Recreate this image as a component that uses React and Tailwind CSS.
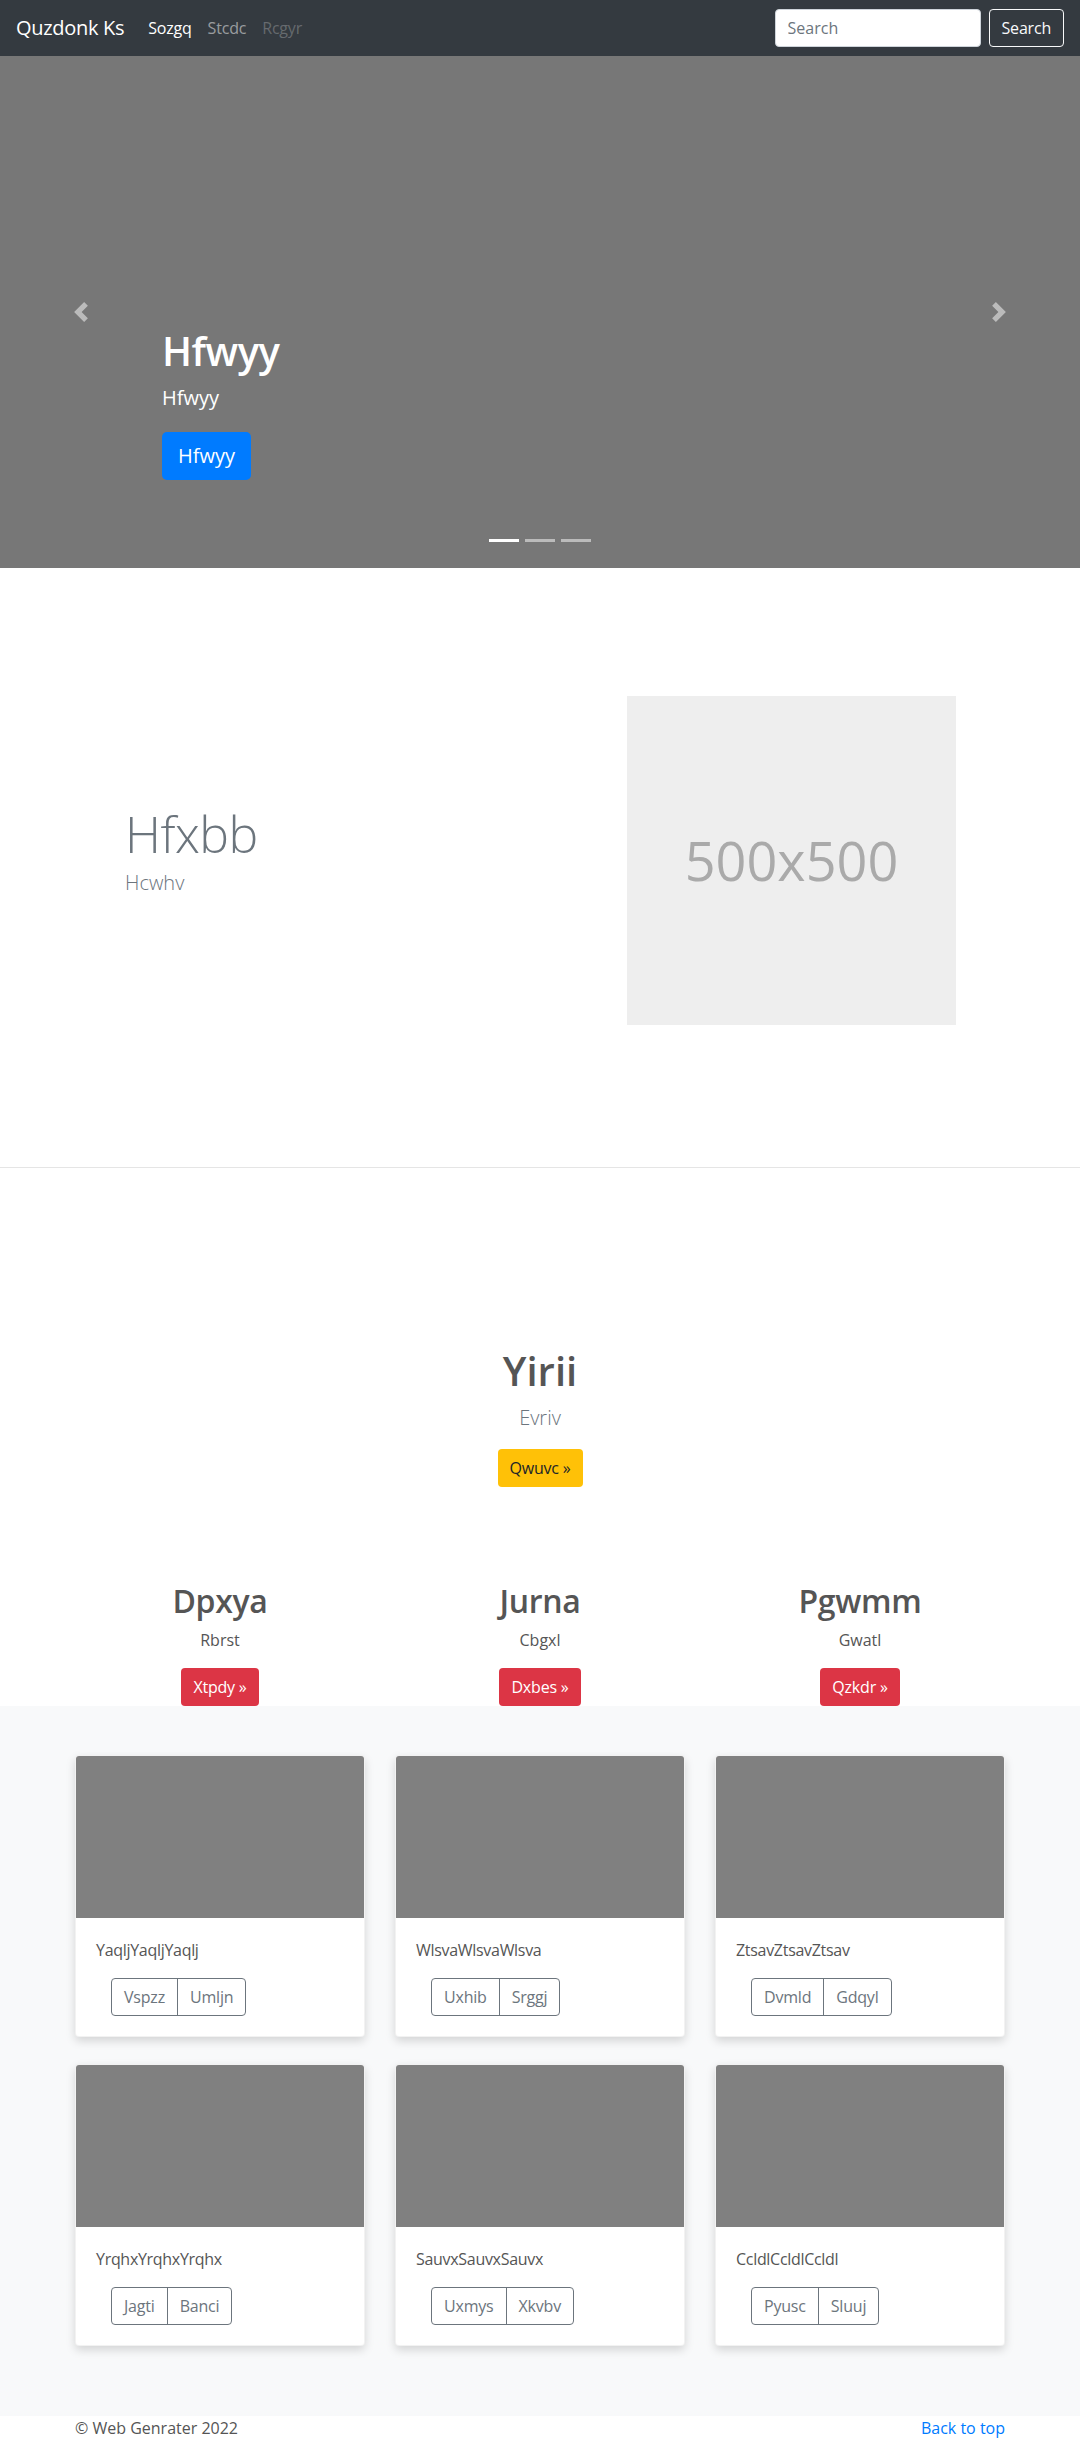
import React from "react";

const cards = [
  { text: "YaqljYaqljYaqlj", a: "Vspzz", b: "Umljn" },
  { text: "WlsvaWlsvaWlsva", a: "Uxhib", b: "Srggj" },
  { text: "ZtsavZtsavZtsav", a: "Dvmld", b: "Gdqyl" },
  { text: "YrqhxYrqhxYrqhx", a: "Jagti", b: "Banci" },
  { text: "SauvxSauvxSauvx", a: "Uxmys", b: "Xkvbv" },
  { text: "CcldlCcldlCcldl", a: "Pyusc", b: "Sluuj" },
];

const columns = [
  { title: "Dpxya", text: "Rbrst", btn: "Xtpdy »" },
  { title: "Jurna", text: "Cbgxl", btn: "Dxbes »" },
  { title: "Pgwmm", text: "Gwatl", btn: "Qzkdr »" },
];

const Chevron = ({ dir }) => (
  <svg width="20" height="20" viewBox="0 0 8 8" className="opacity-50">
    <path
      fill="#fff"
      d={
        dir === "prev"
          ? "M5.25 0l-4 4 4 4 1.5-1.5L4.25 4l2.5-2.5L5.25 0z"
          : "M2.75 0l-1.5 1.5L3.75 4l-2.5 2.5L2.75 8l4-4-4-4z"
      }
    />
  </svg>
);

const Navbar = () => (
  <nav className="h-[56px] bg-[#343a40] flex items-center px-4">
    <span className="text-[20px] leading-[30px] text-white mr-4 tracking-[-0.3px]">Quzdonk Ks</span>
    <a className="px-2 text-white leading-6 tracking-[-0.2px]">Sozgq</a>
    <a className="px-2 text-white/50 leading-6 tracking-[-0.2px]">Stcdc</a>
    <a className="px-2 text-white/25 leading-6 tracking-[-0.2px]">Rcgyr</a>
    <div className="ml-auto flex items-center">
      <input
        placeholder="Search"
        className="w-[206px] h-[38px] rounded bg-white border border-[#ced4da] px-3 text-[#495057] placeholder:text-[#6c757d] mr-2 outline-none"
      />
      <button className="h-[38px] px-3 rounded border border-[#f8f9fa] text-[#f8f9fa] tracking-[-0.2px]">Search</button>
    </div>
  </nav>
);

const Carousel = () => (
  <div className="relative h-[512px] bg-[#777]">
    <div className="pt-[271px] pl-[162px] text-white">
      <h1 className="text-[40px] leading-[48px] font-semibold mb-2 tracking-[-0.5px]">Hfwyy</h1>
      <p className="text-[20px] leading-[30px] mb-[19px]">Hfwyy</p>
      <button className="h-[48px] px-4 rounded-[5px] bg-[#007bff] text-[20px] text-white">Hfwyy</button>
    </div>
    <div className="absolute left-[71px] top-[246px]">
      <Chevron dir="prev" />
    </div>
    <div className="absolute right-[71px] top-[246px]">
      <Chevron dir="next" />
    </div>
    <div className="absolute bottom-[26px] left-0 right-0 flex justify-center gap-[6px]">
      <span className="w-[30px] h-[3px] bg-white" />
      <span className="w-[30px] h-[3px] bg-white/50" />
      <span className="w-[30px] h-[3px] bg-white/50" />
    </div>
  </div>
);

const Featurette = () => (
  <section className="h-[600px] flex border-b border-[#e5e5e5]">
    <div className="w-[627px] pl-[125px] pt-[241px]">
      <h2 className="text-[50px] leading-[50px] font-light text-[#6c757d] mb-[9px] tracking-[-0.5px]">Hfxbb</h2>
      <p className="text-[20px] leading-[30px] font-light text-[#6c757d]">Hcwhv</p>
    </div>
    <div className="mt-[128px] w-[329px] h-[329px] bg-[#eee] flex items-center justify-center">
      <span className="text-[54px] text-[#aaa]">500x500</span>
    </div>
  </section>
);

const Jumbotron = () => (
  <section className="pt-[179px] text-center">
    <h1 className="text-[40px] leading-[48px] font-semibold text-[#555] mb-2">Yirii</h1>
    <p className="text-[20px] leading-[30px] font-light text-[#6c757d] mb-4">Evriv</p>
    <button className="h-[38px] px-3 rounded bg-[#ffc107] text-[#212529] tracking-[-0.2px]">Qwuvc »</button>
    <div className="w-[960px] mx-auto grid grid-cols-3 mt-[95px]">
      {columns.map(c => (
        <div key={c.title} className="flex flex-col items-center">
          <h2 className="text-[32px] leading-[38px] font-semibold text-[#555] mb-2 tracking-[-0.3px]">{c.title}</h2>
          <p className="leading-6 text-[#555] mb-4">{c.text}</p>
          <button className="h-[38px] px-3 rounded bg-[#dc3545] text-white tracking-[-0.2px]">{c.btn}</button>
        </div>
      ))}
    </div>
  </section>
);

const Album = () => (
  <section className="bg-[#f8f9fa] pt-[49px] pb-[70px]">
    <div className="w-[930px] mx-auto grid grid-cols-3 gap-x-[30px] gap-y-[27px]">
      {cards.map(c => (
        <div
          key={c.text}
          className="bg-white rounded border border-black/5 shadow-[0_4px_10px_rgba(0,0,0,0.15)] overflow-hidden"
        >
          <div className="h-[162px] bg-[#808080]" />
          <div className="p-5">
            <p className="leading-6 text-[#555] mb-4 tracking-[-0.3px]">{c.text}</p>
            <div className="ml-[15px] inline-flex h-[38px] rounded border border-[#6c757d] text-[#6c757d] tracking-[-0.2px]">
              <span className="px-3 flex items-center border-r border-[#6c757d]">{c.a}</span>
              <span className="px-3 flex items-center">{c.b}</span>
            </div>
          </div>
        </div>
      ))}
    </div>
  </section>
);

const Footer = () => (
  <footer className="w-[930px] mx-auto flex justify-between leading-6">
    <span className="text-[#555]">© Web Genrater 2022</span>
    <a className="text-[#007bff]">Back to top</a>
  </footer>
);

export default function App() {
  return (
    <div className="font-['Open_Sans','Noto_Sans',sans-serif] text-[16px] bg-white">
      <Navbar />
      <Carousel />
      <Featurette />
      <Jumbotron />
      <Album />
      <Footer />
    </div>
  );
}
